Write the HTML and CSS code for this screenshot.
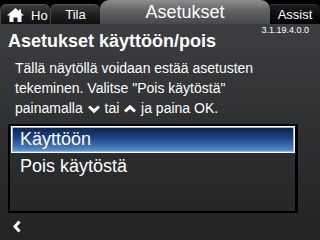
FILE: index.html
```html
<!DOCTYPE html>
<html lang="fi">
<head>
    <meta charset="UTF-8">
    <meta name="viewport" content="width=device-width, initial-scale=1.0">
    <title>Asetukset käyttöön/pois</title>
    <link rel="stylesheet" href="styles.css">
</head>
<body>
    <div class="screen">
        <div class="tabs">
            <div class="tab home">
                <svg class="house" width="17" height="14" viewBox="0 0 17 14">
                    <path d="M8.5 0 L17 7.5 L14.5 7.5 L14.5 14 L10.5 14 L10.5 9.5 L6.5 9.5 L6.5 14 L2.5 14 L2.5 7.5 L0 7.5 Z" fill="#fff"/>
                    <rect x="12" y="1.5" width="2" height="4" fill="#fff"/>
                </svg>
                <span>Ho</span>
            </div>
            <div class="tab tila">Tila</div>
            <div class="tab active">Asetukset</div>
            <div class="tab assist">Assist</div>
        </div>

        <div class="version">3.1.19.4.0.0</div>
        <h1 class="title">Asetukset käyttöön/pois</h1>

        <p class="info">
            Tällä näytöllä voidaan estää asetusten<br>
            tekeminen. Valitse "Pois käytöstä"<br>
            painamalla <svg class="chev" width="12" height="8" viewBox="0 0 12 8"><path d="M1 1.5 L6 6.2 L11 1.5" fill="none" stroke="#fff" stroke-width="3"/></svg> tai <svg class="chev" width="12" height="8" viewBox="0 0 12 8"><path d="M1 6.5 L6 1.8 L11 6.5" fill="none" stroke="#fff" stroke-width="3"/></svg> ja paina OK.
        </p>

        <ul class="options">
            <li class="option selected">Käyttöön</li>
            <li class="option">Pois käytöstä</li>
        </ul>

        <div class="footer">
            <svg width="8" height="13" viewBox="0 0 8 13"><path d="M6.5 1.5 L2 6.5 L6.5 11.5" fill="none" stroke="#fff" stroke-width="3"/></svg>
        </div>
    </div>
</body>
</html>
```

FILE: styles.css
```css
* {
    box-sizing: border-box;
    margin: 0;
    padding: 0;
}

body {
    font-family: "Liberation Sans", Arial, sans-serif;
    background-color: #000;
    color: #fff;
}

.screen {
    width: 320px;
    height: 240px;
    overflow: hidden;
    background: linear-gradient(to bottom, #404144 0%, #2e2f31 55%, #222325 100%);
}

/* Tab bar */
.tabs {
    display: flex;
    align-items: flex-end;
    height: 24px;
    background-color: #000;
}

.tab {
    display: flex;
    align-items: center;
    justify-content: center;
    height: 20px;
    width: 50px;
    font-size: 13px;
    color: #fff;
    border-radius: 6px 6px 0 0;
    background: linear-gradient(to bottom, #3d3d3e, #1b1b1c 60%, #111);
    border-top: 1px solid #555;
    border-left: 1px solid #444;
}

.home {
    justify-content: flex-start;
    padding-left: 6px;
    gap: 7px;
}

.home span {
    padding-top: 1px;
}

.active {
    width: 170px;
    height: 24px;
    font-size: 18px;
    border: none;
    border-radius: 9px 9px 0 0;
    background: linear-gradient(to bottom, #8e8e8f 0%, #626264 45%, #48494c 100%);
}

.assist {
    background: linear-gradient(to bottom, #1c1c1c, #000);
    border-left: none;
    border-top: 1px solid #333;
    border-radius: 0 6px 0 0;
}

/* Header texts */
.version {
    height: 7px;
    font-size: 9px;
    line-height: 13px;
    text-align: right;
    padding-right: 11px;
}

.title {
    font-size: 18px;
    font-weight: bold;
    line-height: 20px;
    padding-left: 8px;
}

.info {
    margin-top: 7px;
    padding-left: 15px;
    font-size: 14px;
    line-height: 20px;
}

.chev {
    vertical-align: 0;
    margin: 0 1px;
}

/* Option list */
.options {
    list-style: none;
    margin: 6px 0 0 8px;
    width: 290px;
    height: 89px;
    border: 2px solid #000;
    border-right-width: 3px;
    padding-left: 1px;
}

.option {
    height: 27px;
    line-height: 25px;
    font-size: 18px;
    padding-left: 8px;
    border: 1px solid transparent;
}

.option + .option {
    height: 26px;
}

.option.selected {
    border-color: #fff;
    box-shadow: inset 0 0 0 1px #8fb8e6;
    background: linear-gradient(to bottom, #0b2148 0%, #1d4587 45%, #4b7ec0 85%, #6d9bcf 100%);
}

.footer {
    padding: 6px 0 0 13px;
}
```
